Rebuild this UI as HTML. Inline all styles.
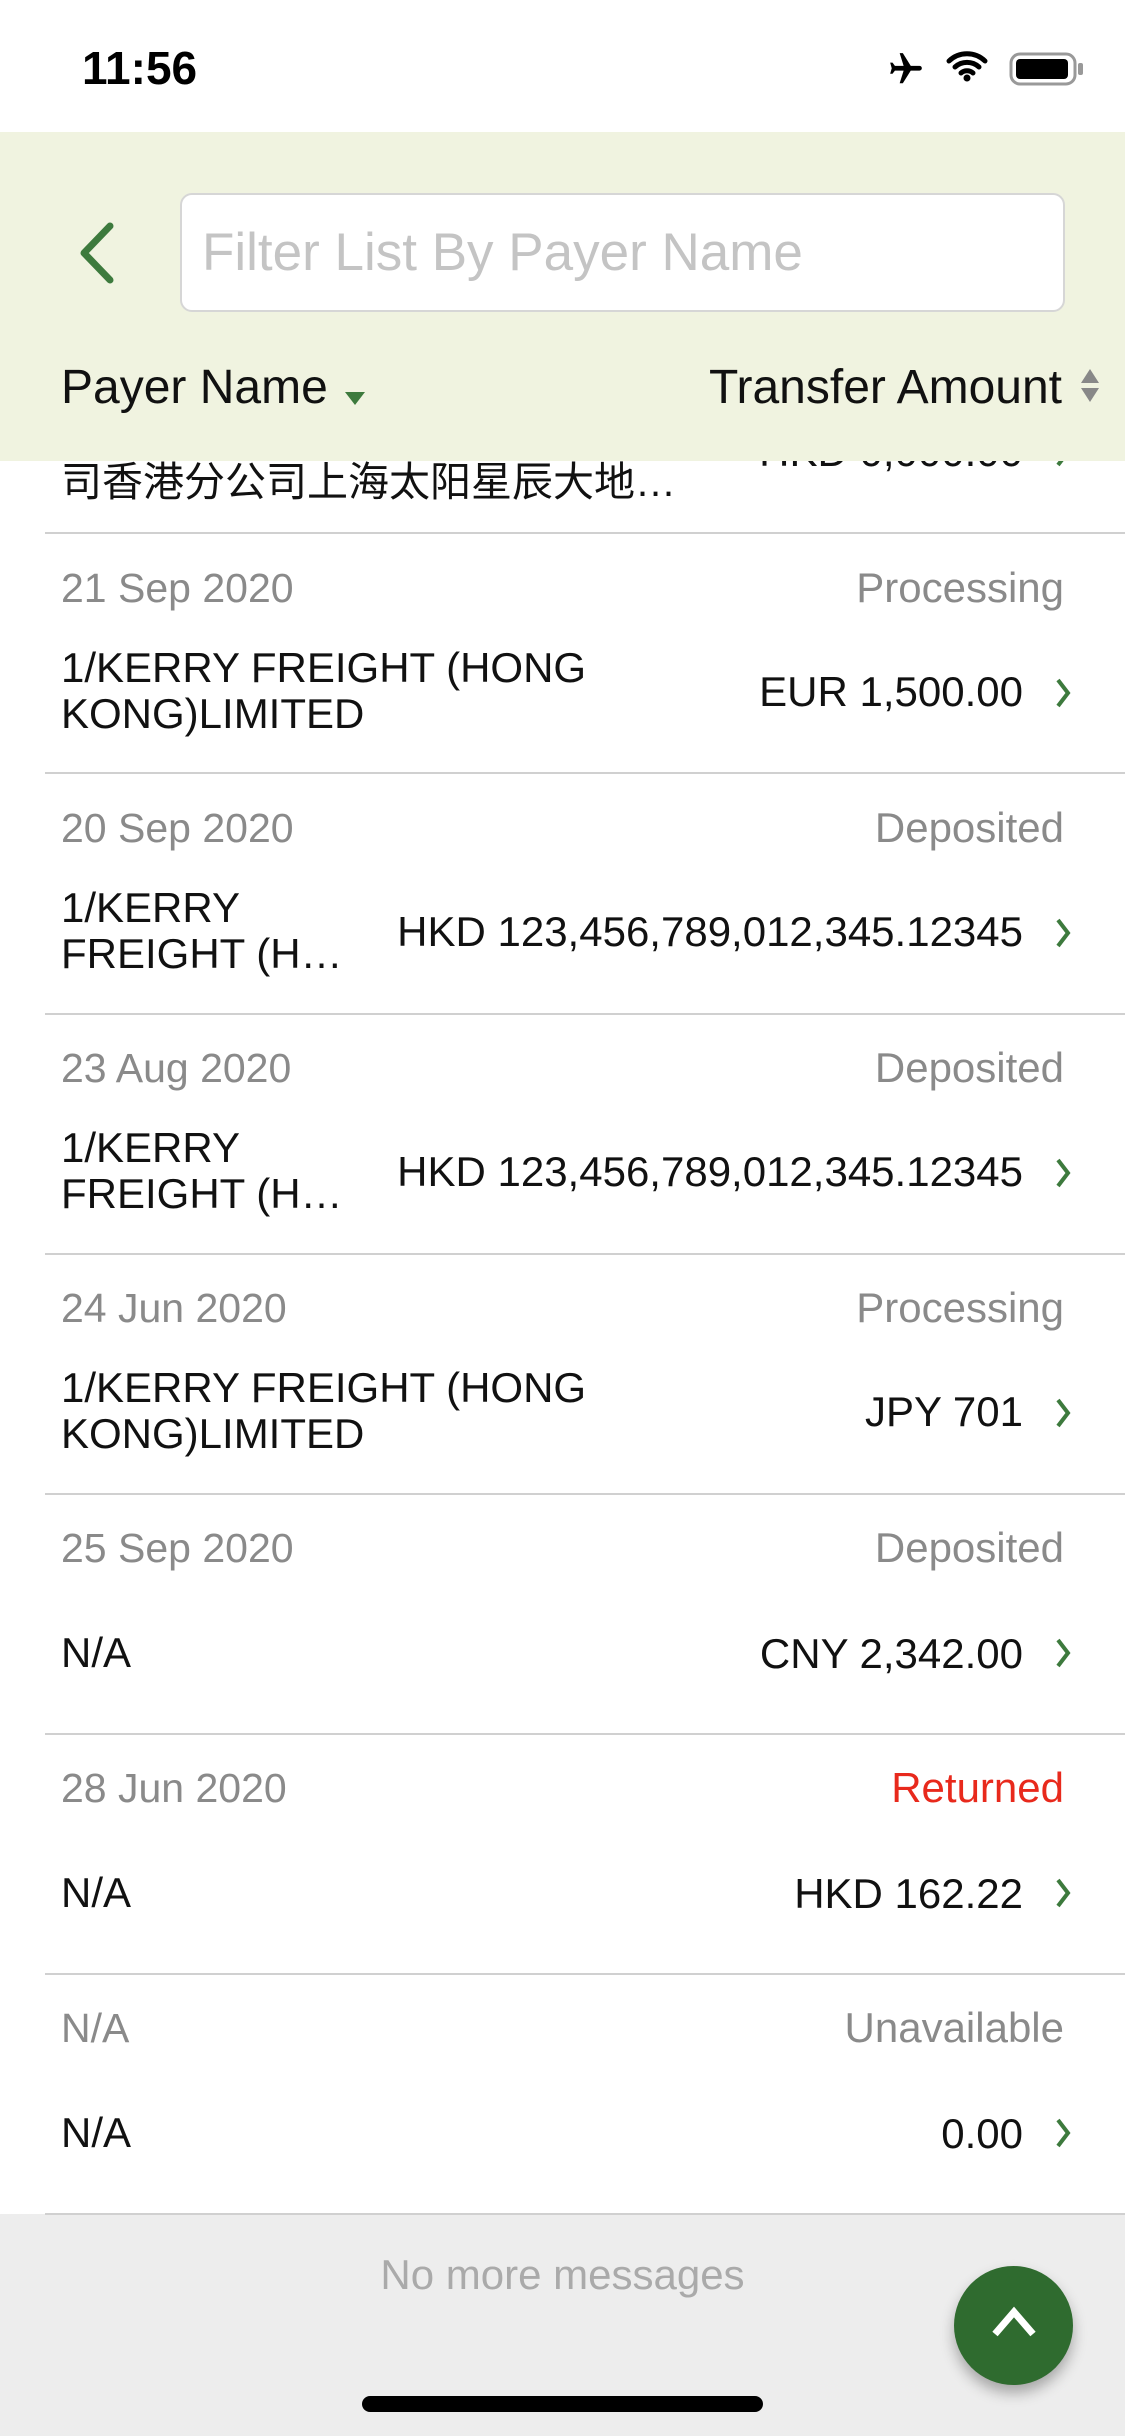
<!DOCTYPE html>
<html><head><meta charset="utf-8"><style>
*{margin:0;padding:0;box-sizing:border-box}
body{width:1125px;height:2436px;position:relative;background:#fff;font-family:"Liberation Sans","Noto Sans CJK SC",sans-serif;overflow:hidden}
.a{position:absolute;white-space:nowrap}
.sep{position:absolute;left:45px;right:0;height:2px;background:#d0d0d0}
.date{font-size:41px;color:#8a8a8a;left:61px}
.st{font-size:42px;color:#8a8a8a;right:61px}
.nm{font-size:42px;color:#111;left:61px;line-height:46px}
.am{font-size:42px;color:#111;right:102px}
.ch{position:absolute;right:54px;width:16px;height:32px}
</style></head><body>
<!-- partial row -->
<div class="a nm" style="top:459px;font-size:41px">司香港分公司上海太阳星辰大地…</div>
<div class="a am" style="top:428px">HKD 0,000.00</div>
<svg class="ch" style="top:436px" viewBox="0 0 16 32"><path d="M3 3l10 13L3 29" stroke="#3d7a3d" stroke-width="4" fill="none"/></svg>
<div class="sep" style="top:532px"></div>

<!-- status bar -->
<div class="a" style="left:0;top:0;width:1125px;height:132px;background:#fff;z-index:5"></div>
<div class="a" style="left:82px;top:41px;font-size:46px;font-weight:bold;z-index:6">11:56</div>
<svg class="a" style="left:884px;top:50px;z-index:6" width="44" height="38" viewBox="0 0 24 24"><path fill="#000" d="M21 16v-2l-8-5V3.5A1.5 1.5 0 0 0 11.5 2 1.5 1.5 0 0 0 10 3.5V9l-8 5v2l8-2.5V19l-2 1.5V22l3.5-1 3.5 1v-1.5L13 19v-5.5z" transform="rotate(90 12 12)"/></svg>
<svg class="a" style="left:946px;top:50px;z-index:6" width="42" height="32" viewBox="0 0 42 32"><path d="M3 11a26 26 0 0 1 36 0M9 17a18 18 0 0 1 24 0M15 23a9 9 0 0 1 12 0" stroke="#000" stroke-width="5" fill="none" stroke-linecap="round"/><circle cx="21" cy="28" r="3.5" fill="#000"/></svg>
<svg class="a" style="left:1009px;top:52px;z-index:6" width="76" height="34" viewBox="0 0 76 34"><rect x="2" y="2" width="64" height="30" rx="9" fill="none" stroke="#999" stroke-width="3"/><rect x="7" y="7" width="52" height="20" rx="4" fill="#000"/><rect x="69" y="11" width="5" height="12" rx="2" fill="#999"/></svg>

<!-- header -->
<div class="a" style="left:0;top:132px;width:1125px;height:329px;background:#f0f3e0;z-index:5"></div>
<svg class="a" style="left:74px;top:220px;z-index:6" width="44" height="66" viewBox="0 0 44 66"><path d="M36 6L10 33l26 27" stroke="#3d7a3d" stroke-width="7" fill="none" stroke-linecap="round" stroke-linejoin="round"/></svg>
<div class="a" style="left:180px;top:193px;width:885px;height:119px;background:#fff;border:2px solid #d6d6d6;border-radius:12px;z-index:6"></div>
<div class="a" style="left:202px;top:222px;font-size:53px;color:#c4c4c4;z-index:7">Filter List By Payer Name</div>
<div class="a" style="left:61px;top:360px;font-size:48px;color:#111;z-index:6">Payer Name</div>
<div class="a" style="left:345px;top:392px;width:0;height:0;border-left:10px solid transparent;border-right:10px solid transparent;border-top:13px solid #3d7a3d;z-index:6"></div>
<div class="a" style="right:63px;top:360px;font-size:48px;color:#111;z-index:6">Transfer Amount</div>
<div class="a" style="left:1081px;top:369px;width:0;height:0;border-left:9px solid transparent;border-right:9px solid transparent;border-bottom:14px solid #888;z-index:6"></div>
<div class="a" style="left:1081px;top:388px;width:0;height:0;border-left:9px solid transparent;border-right:9px solid transparent;border-top:14px solid #888;z-index:6"></div>

<!-- rows -->
<div class="a date" style="top:565px">21 Sep 2020</div><div class="a st" style="top:564px">Processing</div>
<div class="a nm" style="top:645px">1/KERRY FREIGHT (HONG<br>KONG)LIMITED</div><div class="a am" style="top:668px">EUR 1,500.00</div>
<svg class="ch" style="top:677px" viewBox="0 0 16 32"><path d="M3 3l10 13L3 29" stroke="#3d7a3d" stroke-width="4" fill="none"/></svg>
<div class="sep" style="top:772px"></div>

<div class="a date" style="top:805px">20 Sep 2020</div><div class="a st" style="top:804px">Deposited</div>
<div class="a nm" style="top:885px">1/KERRY<br>FREIGHT (H…</div><div class="a am" style="top:908px">HKD 123,456,789,012,345.12345</div>
<svg class="ch" style="top:917px" viewBox="0 0 16 32"><path d="M3 3l10 13L3 29" stroke="#3d7a3d" stroke-width="4" fill="none"/></svg>
<div class="sep" style="top:1013px"></div>

<div class="a date" style="top:1045px">23 Aug 2020</div><div class="a st" style="top:1044px">Deposited</div>
<div class="a nm" style="top:1125px">1/KERRY<br>FREIGHT (H…</div><div class="a am" style="top:1148px">HKD 123,456,789,012,345.12345</div>
<svg class="ch" style="top:1157px" viewBox="0 0 16 32"><path d="M3 3l10 13L3 29" stroke="#3d7a3d" stroke-width="4" fill="none"/></svg>
<div class="sep" style="top:1253px"></div>

<div class="a date" style="top:1285px">24 Jun 2020</div><div class="a st" style="top:1284px">Processing</div>
<div class="a nm" style="top:1365px">1/KERRY FREIGHT (HONG<br>KONG)LIMITED</div><div class="a am" style="top:1388px">JPY 701</div>
<svg class="ch" style="top:1397px" viewBox="0 0 16 32"><path d="M3 3l10 13L3 29" stroke="#3d7a3d" stroke-width="4" fill="none"/></svg>
<div class="sep" style="top:1493px"></div>

<div class="a date" style="top:1525px">25 Sep 2020</div><div class="a st" style="top:1524px">Deposited</div>
<div class="a nm" style="top:1630px">N/A</div><div class="a am" style="top:1630px">CNY 2,342.00</div>
<svg class="ch" style="top:1637px" viewBox="0 0 16 32"><path d="M3 3l10 13L3 29" stroke="#3d7a3d" stroke-width="4" fill="none"/></svg>
<div class="sep" style="top:1733px"></div>

<div class="a date" style="top:1765px">28 Jun 2020</div><div class="a st" style="top:1764px;color:#e8291c">Returned</div>
<div class="a nm" style="top:1870px">N/A</div><div class="a am" style="top:1870px">HKD 162.22</div>
<svg class="ch" style="top:1877px" viewBox="0 0 16 32"><path d="M3 3l10 13L3 29" stroke="#3d7a3d" stroke-width="4" fill="none"/></svg>
<div class="sep" style="top:1973px"></div>

<div class="a date" style="top:2005px">N/A</div><div class="a st" style="top:2004px">Unavailable</div>
<div class="a nm" style="top:2110px">N/A</div><div class="a am" style="top:2110px">0.00</div>
<svg class="ch" style="top:2117px" viewBox="0 0 16 32"><path d="M3 3l10 13L3 29" stroke="#3d7a3d" stroke-width="4" fill="none"/></svg>

<!-- footer -->
<div class="a" style="left:0;top:2214px;width:1125px;height:222px;background:#ededed"></div>
<div class="sep" style="top:2213px"></div>
<div class="a" style="left:0;width:1125px;text-align:center;top:2251px;font-size:42px;color:#aaa">No more messages</div>
<div class="a" style="left:954px;top:2266px;width:119px;height:119px;border-radius:50%;background:#2f6b2f;box-shadow:0 8px 14px rgba(0,0,0,0.3)"></div>
<svg class="a" style="left:990px;top:2304px" width="48" height="36" viewBox="0 0 48 36"><path d="M5 30L24 8l19 22" stroke="#fff" stroke-width="7" fill="none"/></svg>
<div class="a" style="left:362px;top:2396px;width:401px;height:16px;border-radius:8px;background:#000"></div>
</body></html>
